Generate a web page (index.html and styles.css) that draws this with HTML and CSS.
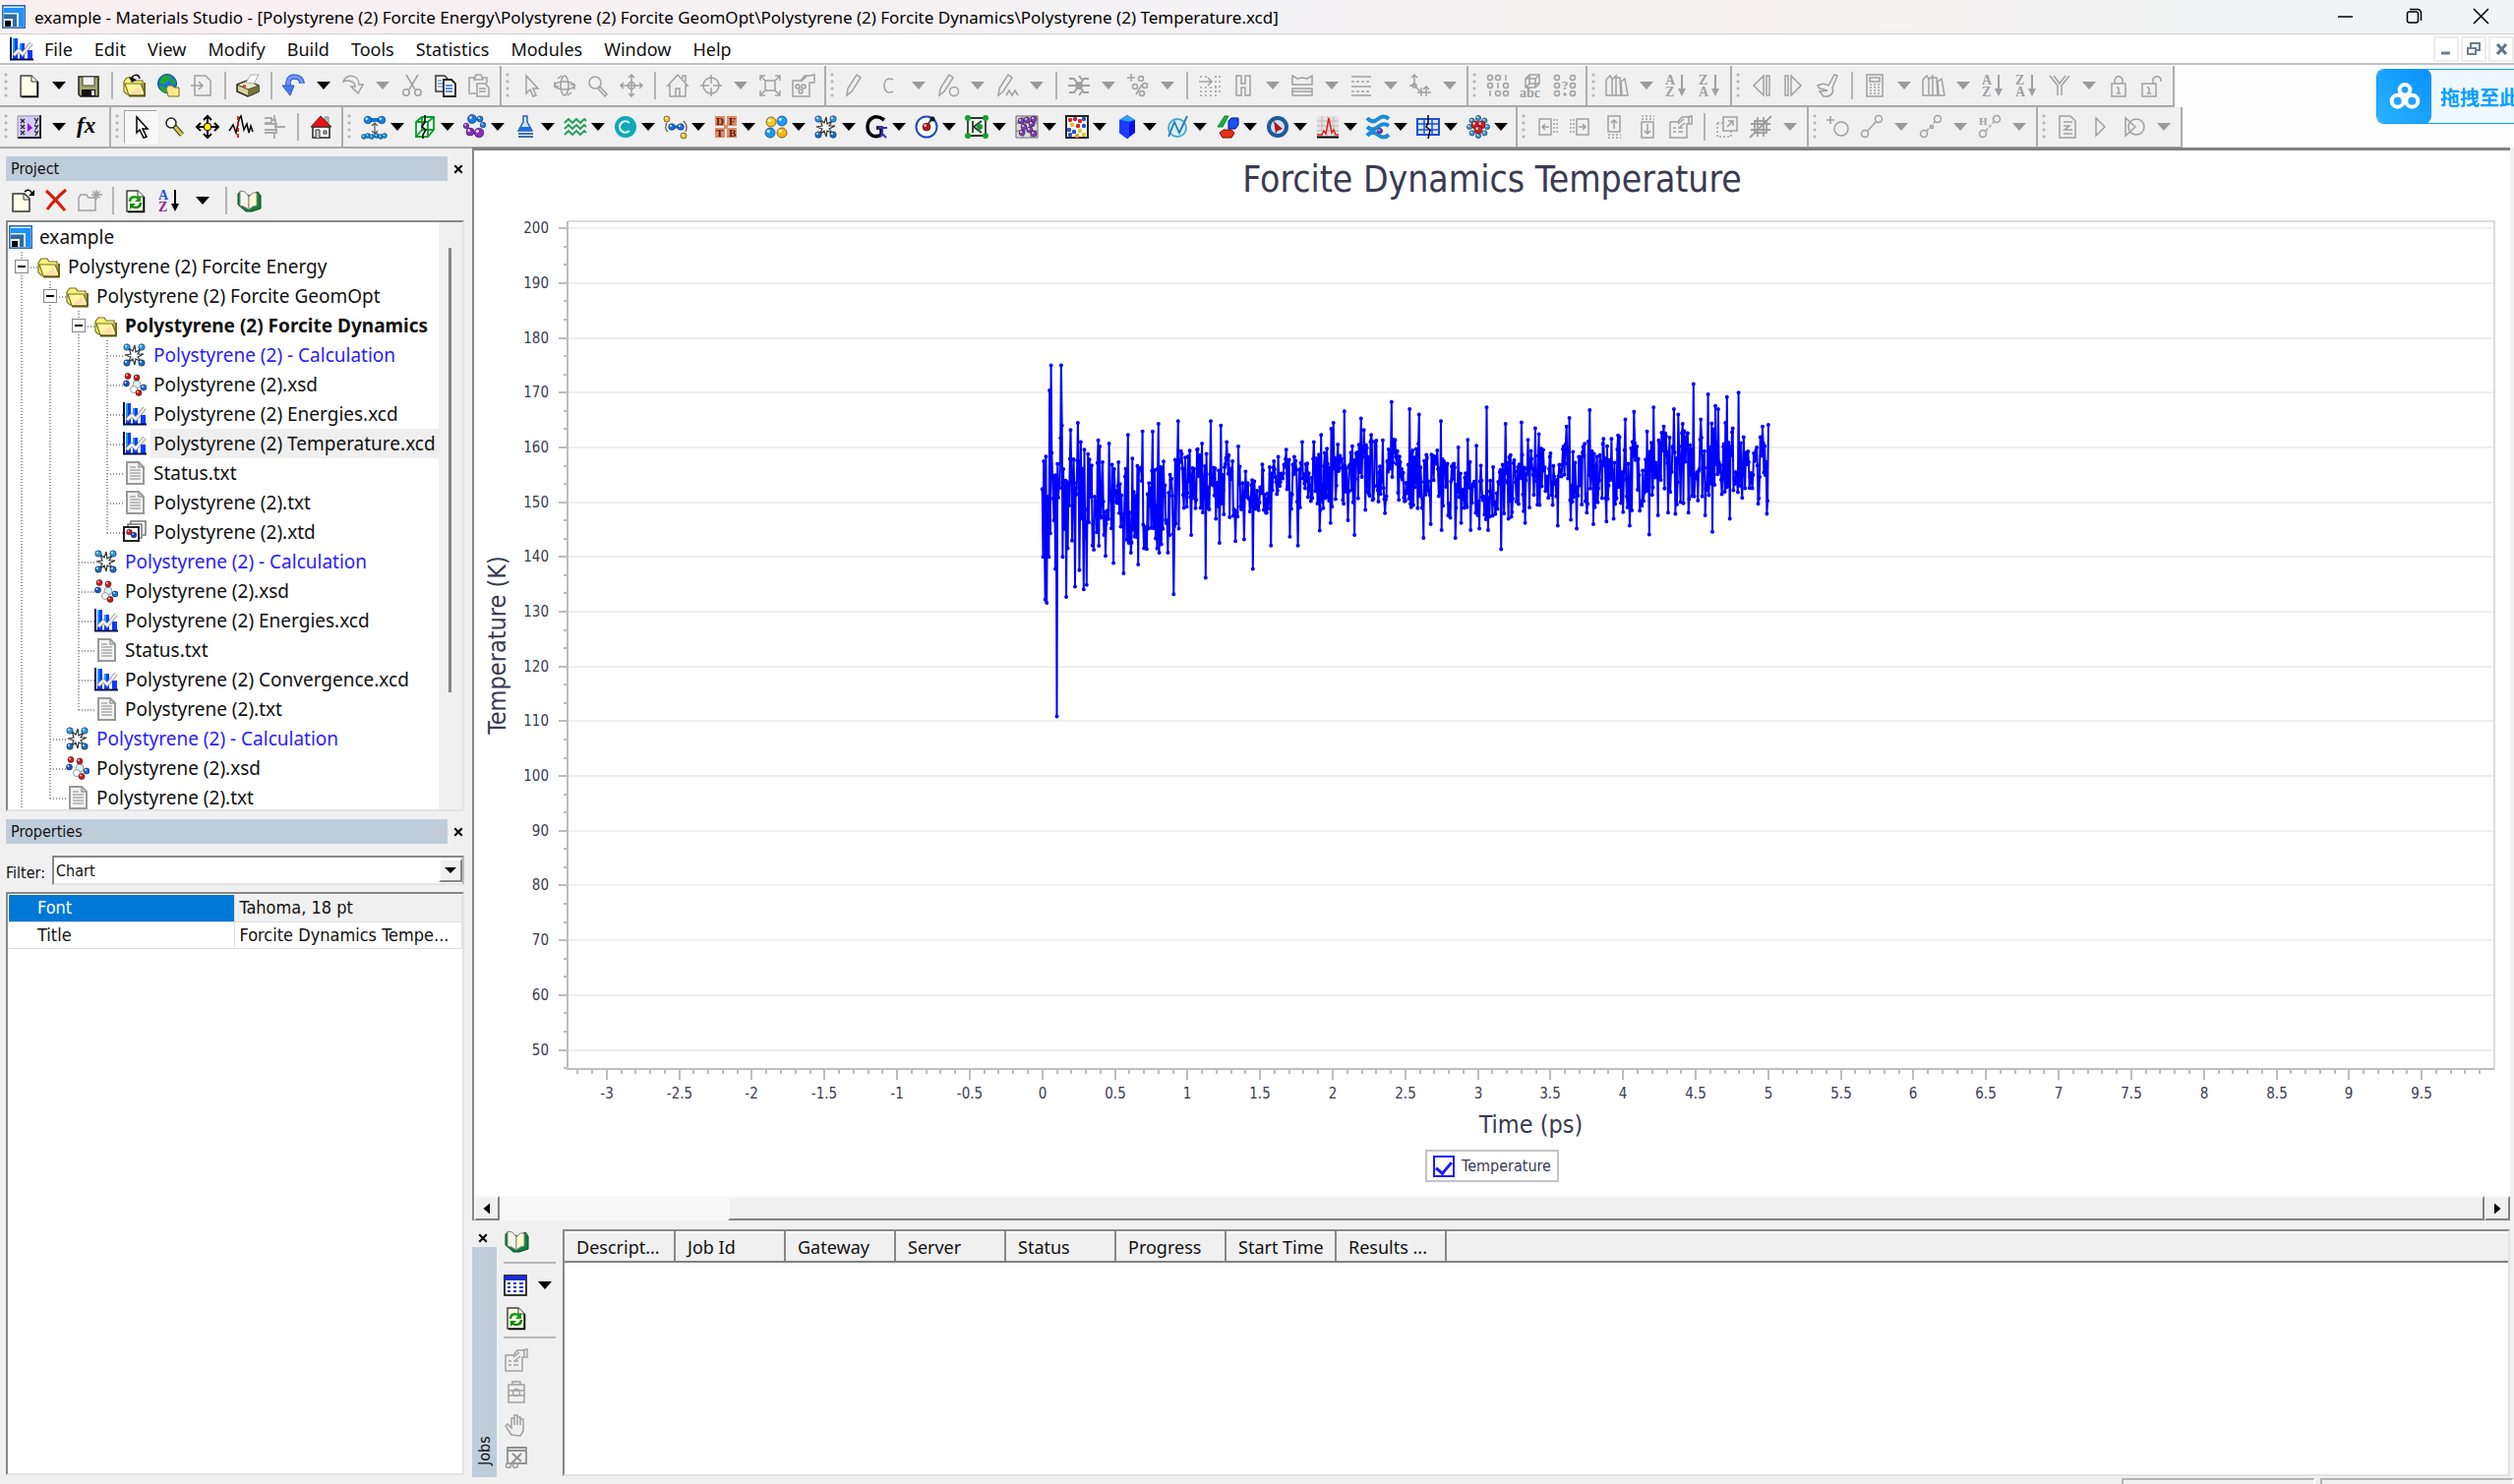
FILE: index.html
```html
<!DOCTYPE html>
<html lang="en">
<head>
    <meta charset="UTF-8">
    <meta name="viewport" content="width=device-width, initial-scale=1.0">
    <title>example - Materials Studio</title>
    <link rel="stylesheet" href="styles.css">
</head>
<body>
    <!-- Title bar -->
    <header class="titlebar">
        <span data-icon="app"></span>
        <span class="title">example - Materials Studio - [Polystyrene (2) Forcite Energy\Polystyrene (2) Forcite GeomOpt\Polystyrene (2) Forcite Dynamics\Polystyrene (2) Temperature.xcd]</span>
        <button class="winbtn" aria-label="Minimize" data-icon="winmin"></button>
        <button class="winbtn" aria-label="Restore" data-icon="winmax"></button>
        <button class="winbtn" aria-label="Close" data-icon="winclose"></button>
    </header>

    <!-- Menu -->
    <nav class="menubar">
        <span data-icon="chart"></span>
        <button>File</button>
        <button>Edit</button>
        <button>View</button>
        <button>Modify</button>
        <button>Build</button>
        <button>Tools</button>
        <button>Statistics</button>
        <button>Modules</button>
        <button>Window</button>
        <button>Help</button>
        <span class="spacer"></span>
        <button class="mdibtn" aria-label="Minimize document" data-icon="mdimin"></button>
        <button class="mdibtn" aria-label="Restore document" data-icon="mdimax"></button>
        <button class="mdibtn" aria-label="Close document" data-icon="mdiclose"></button>
    </nav>

    <!-- Toolbars, filled in by app.js -->
    <div class="toolbars">
        <div class="toolrow" id="toolrow1"></div>
        <div class="toolrow" id="toolrow2"></div>
    </div>

    <div class="upload">
        <span class="upload-logo" data-icon="cloud"></span>
        <span class="upload-text">拖拽至此</span>
    </div>

    <main class="workspace">
        <aside class="sidebar">
            <div class="panel-head">
                <h2>Project</h2>
                <button class="close" aria-label="Close Project" data-icon="x"></button>
            </div>
            <div class="project-tools">
                <button aria-label="New document" data-icon="newdoc"></button>
                <button aria-label="Delete" data-icon="del"></button>
                <button aria-label="New folder" data-icon="newfolder"></button>
                <i class="sep"></i>
                <button aria-label="Refresh" data-icon="refresh"></button>
                <button aria-label="Sort" data-icon="sortcolor"></button>
                <button class="drop" aria-label="Sort options"></button>
                <i class="sep"></i>
                <button aria-label="Help" data-icon="book"></button>
            </div>
            <div class="tree">
                <ul id="tree"></ul>
                <div class="scroll"><div class="scroll-thumb"></div></div>
            </div>

            <div class="panel-head">
                <h2>Properties</h2>
                <button class="close" aria-label="Close Properties" data-icon="x"></button>
            </div>
            <div class="filter">
                <label for="filter">Filter:</label>
                <div class="select-wrap">
                    <select id="filter"><option>Chart</option></select>
                    <span class="select-arrow"></span>
                </div>
            </div>
            <div class="props">
                <table>
                    <tr class="selected"><th>Font</th><td>Tahoma, 18 pt</td></tr>
                    <tr><th>Title</th><td>Forcite Dynamics Tempe...</td></tr>
                </table>
            </div>
        </aside>

        <section class="content">
            <div class="document">
                <div class="chart">
                    <h1>Forcite Dynamics Temperature</h1>
                    <svg id="plot" role="img" aria-label="Temperature against time"></svg>
                    <label class="legend"><input type="checkbox" checked>Temperature</label>
                </div>
                <div class="hscroll">
                    <button aria-label="Scroll left" data-icon="left"></button>
                    <div class="hscroll-track"><div class="hscroll-thumb"></div></div>
                    <button aria-label="Scroll right" data-icon="right"></button>
                </div>
            </div>

            <div class="jobs">
                <div class="jobs-side">
                    <button class="close" aria-label="Close Jobs" data-icon="x"></button>
                    <h2>Jobs</h2>
                </div>
                <div class="jobs-tools">
                    <button aria-label="Help" data-icon="book"></button>
                    <hr>
                    <div class="pair">
                        <button aria-label="View" data-icon="grid"></button>
                        <button class="drop" aria-label="View options"></button>
                    </div>
                    <button aria-label="Refresh" data-icon="refresh"></button>
                    <hr>
                    <button aria-label="Job properties" disabled data-icon="props"></button>
                    <button aria-label="Job details" disabled data-icon="monitor"></button>
                    <button aria-label="Stop job" disabled data-icon="hand"></button>
                    <button aria-label="Remove job" disabled data-icon="remove"></button>
                </div>
                <div class="jobs-list">
                    <table>
                        <tr>
                            <th>Descript...</th><th>Job Id</th><th>Gateway</th><th>Server</th>
                            <th>Status</th><th>Progress</th><th>Start Time</th><th>Results ...</th>
                            <th class="rest"></th>
                        </tr>
                    </table>
                </div>
            </div>
        </section>
    </main>

    <footer class="statusbar"><span></span><span></span></footer>

    <script src="app.js"></script>
</body>
</html>
```
FILE: styles.css
```css
* {
    box-sizing: border-box;
}
body {
    margin: 0;
    height: 100vh;
    display: flex;
    flex-direction: column;
    overflow: hidden;
    background-color: #f0f0f0;
    color: #111;
    font-family: "Noto Sans", sans-serif;
    font-size: 18px;
}
button {
    padding: 0;
    border: none;
    background: none;
    color: inherit;
    font: inherit;
    display: flex;
    align-items: center;
    justify-content: center;
}
h1, h2 {
    margin: 0;
    font-weight: normal;
}
svg {
    display: block;
}
[data-icon] > svg {
    width: 24px;
    height: 24px;
    overflow: visible;
}

/* title bar and menu */
.titlebar {
    flex: none;
    display: flex;
    align-items: center;
    height: 35px;
    padding-left: 2px;
    background: linear-gradient(90deg, #f9eff1, #f3f2f4 50%, #f7f2f1 70%, #f1f3f4 90%);
    border-bottom: 1px solid #d0d0d0;
}
.title {
    flex: 1;
    padding-left: 9px;
    font-size: 17px;
    white-space: nowrap;
    color: #000;
}
.winbtn {
    width: 70px;
    height: 34px;
}
.titlebar .winbtn:last-child {
    width: 66px;
}
.menubar {
    flex: none;
    display: flex;
    align-items: center;
    height: 29px;
    padding-left: 10px;
    background-color: #fff;
}
.menubar button {
    height: 26px;
    padding: 0 11px;
}
.spacer {
    flex: 1;
}
.menubar .mdibtn {
    width: 26px;
    height: 26px;
    padding: 0;
    margin-right: 2px;
    border: 2px solid #ececec;
}
.menubar .mdibtn:last-child {
    margin-right: 0;
}

/* toolbars */
.toolbars {
    flex: none;
    height: 86px;
    padding-top: 1px;
    background-color: #fdfdfd;
    border-top: 2px solid #c0c0c0;
}
.toolrow {
    display: flex;
    width: max-content;
    height: 42px;
    background-color: #f0f0f0;
    border-bottom: 2px solid #a8a8a8;
}
.group {
    display: flex;
    align-items: center;
    padding-right: 4px;
    border-right: 2px solid #adadad;
}
.grip {
    width: 13px;
    height: 28px;
    background: radial-gradient(circle at 6px 3px, #b8b8b8 1px, transparent 2px) 0 0 / 13px 7px;
}
.group button {
    width: 34px;
    height: 34px;
}
.group .pressed {
    background-color: #f8f8f8;
    border: 1px solid #a0a0a0;
    border-right-color: #fff;
    border-bottom-color: #fff;
}
.drop::before {
    content: "";
    border: 7px solid transparent;
    border-top: 8px solid #000;
    border-bottom: none;
}
.drop:disabled::before {
    border-top-color: #9a9a9a;
}
.group .drop {
    width: 26px;
}
.modules .grip {
    width: 15px;
}
.modules button {
    width: 33px;
}
.modules .drop {
    width: 18px;
    justify-content: flex-start;
}
.sep {
    width: 2px;
    height: 28px;
    margin: 0 5px 0 6px;
    background-color: #b4b4b4;
}

/* floating upload badge over the toolbars */
.upload {
    position: absolute;
    top: 70px;
    right: 0;
    display: flex;
    align-items: center;
    width: 140px;
    height: 56px;
    overflow: hidden;
    background-color: #eff8ff;
    border: 1px solid #0a9bff;
    border-right: none;
    border-radius: 8px 0 0 8px;
}
.upload-logo {
    flex: none;
    width: 55px;
    height: 56px;
    display: flex;
    align-items: center;
    justify-content: center;
    border-radius: 8px;
    background: linear-gradient(45deg, #2ab4ff, #0a90ff);
}
.upload-logo > svg {
    width: 32px;
    height: 32px;
}
.upload-text {
    flex: none;
    padding-left: 9px;
    font-family: "Noto Sans CJK SC", sans-serif;
    font-size: 20px;
    font-weight: bold;
    color: #06a0ff;
    white-space: nowrap;
}

/* left side */
.workspace {
    flex: 1;
    min-height: 0;
    display: flex;
}
.sidebar {
    flex: none;
    width: 480px;
    display: flex;
    flex-direction: column;
    padding: 9px 8px 2px 6px;
    font-family: "DejaVu Sans Condensed", "DejaVu Sans", sans-serif;
    font-size: 18px;
}
.panel-head {
    display: flex;
    align-items: center;
    height: 25px;
}
.panel-head h2 {
    flex: 1;
    height: 25px;
    padding-left: 5px;
    background-color: #bfcddb;
    font-size: 16px;
    line-height: 26px;
}
.close {
    width: 16px;
    height: 24px;
}
.close > svg {
    width: 10px;
    height: 10px;
}
.panel-head .close {
    margin-right: -2px;
    margin-left: 3px;
}
.project-tools {
    display: flex;
    align-items: center;
    height: 40px;
}
.project-tools button {
    width: 34px;
    height: 34px;
}
.tree, .props, .jobs-list {
    background-color: #fff;
    border: 2px solid #888;
    border-right-color: #e3e3e3;
    border-bottom-color: #e3e3e3;
}
.tree {
    display: flex;
    height: 601px;
    margin-bottom: 8px;
    overflow: hidden;
    font-family: "Noto Sans", sans-serif;
    font-size: 19px;
}
.tree ul {
    flex: 1;
    margin: 0;
    padding: 0 0 0 1px;
    list-style: none;
}
.tree li {
    display: flex;
    align-items: center;
    height: 30px;
    white-space: nowrap;
}
.tree li > svg {
    flex: none;
    width: 24px;
    height: 24px;
}
.tree .name {
    margin-left: 4px;
    padding: 0 3px;
    line-height: 30px;
}
.tree .current {
    font-weight: bold;
}
.tree .running {
    color: #2a20ff;
}
.tree .active {
    background-color: #efefef;
}
/* one cell of dotted tree line */
.line {
    flex: none;
    display: flex;
    align-items: center;
    width: 29px;
    height: 30px;
    padding-left: 6px;
    --v: repeating-linear-gradient(180deg, #999 0 1px, transparent 1px 3px);
    --h: repeating-linear-gradient(90deg, #999 0 1px, transparent 1px 3px);
    background-repeat: no-repeat;
}
.line.pass {
    background-image: var(--v);
    background-size: 2px 30px;
    background-position: 12px 0;
}
.line.tee {
    background-image: var(--v), var(--h);
    background-size: 2px 30px, 16px 2px;
    background-position: 12px 0, 13px 15px;
}
.line.end {
    background-image: var(--v), var(--h);
    background-size: 2px 16px, 16px 2px;
    background-position: 12px 0, 13px 15px;
}
.box {
    width: 14px;
    height: 14px;
    border: 1px solid #888;
    background: linear-gradient(#000, #000) center / 8px 2px no-repeat #fff;
}
.scroll {
    flex: none;
    width: 24px;
    padding-top: 26px;
    background-color: #f0f0f0;
}
.scroll-thumb {
    width: 3px;
    height: 452px;
    margin-left: 10px;
    background-color: #868686;
}
.filter {
    display: flex;
    align-items: center;
    height: 48px;
    margin-top: 3px;
}
.filter label {
    width: 47px;
    padding-top: 4px;
    font-size: 16px;
}
.select-wrap {
    flex: 1;
    position: relative;
    height: 30px;
}
.filter select {
    width: 100%;
    height: 30px;
    padding: 0 2px;
    appearance: none;
    border: 2px solid #888;
    border-right-color: #bbb;
    border-bottom-color: #e3e3e3;
    border-radius: 0;
    background-color: #fff;
    color: #111;
    font-family: inherit;
    font-size: 16px;
}
.select-arrow {
    position: absolute;
    top: 3px;
    right: 2px;
    display: flex;
    align-items: center;
    justify-content: center;
    width: 24px;
    height: 24px;
    background-color: #f0f0f0;
    border: 2px solid #fff;
    border-right-color: #888;
    border-bottom-color: #888;
    pointer-events: none;
}
.select-arrow::before {
    content: "";
    border: 6px solid transparent;
    border-top-color: #000;
    border-bottom: none;
}
.props {
    flex: 1;
    margin-top: -2px;
    padding: 1px 0 0 1px;
}
.props table {
    width: 100%;
    border-collapse: collapse;
    table-layout: fixed;
}
.props th, .props td {
    height: 27px;
    padding: 0 0 0 5px;
    border-bottom: 1px solid #dde0e4;
    border-right: 1px solid #dde0e4;
    font-weight: normal;
    line-height: 24px;
    text-align: left;
    white-space: nowrap;
}
.props th {
    width: 229px;
    padding-left: 29px;
}
.selected th {
    background-color: #0078d7;
    color: #fff;
}
.selected td {
    background-color: #f0f0f0;
}

/* document window */
.content {
    flex: 1;
    min-width: 0;
    display: flex;
    flex-direction: column;
    padding-right: 4px;
}
.document {
    flex: 1;
    min-height: 0;
    display: flex;
    flex-direction: column;
    border-top: 3px solid #808080;
    border-left: 2px solid #888;
}
.chart {
    flex: 1;
    min-height: 0;
    display: flex;
    flex-direction: column;
    align-items: center;
    padding-bottom: 14px;
    background-color: #fff;
    color: #3a3a52;
    font-family: "DejaVu Sans Condensed", "DejaVu Sans", sans-serif;
}
.chart h1 {
    height: 59px;
    font-size: 37px;
    line-height: 60px;
}
#plot {
    flex: 1;
    width: 100%;
    min-height: 0;
}
#plot text {
    fill: #3a3a52;
    font-size: 15px;
    text-anchor: middle;
}
#plot text.ylabel {
    text-anchor: end;
}
#plot text.axis {
    font-size: 25px;
}
.frame, .axisline, .grid {
    fill: none;
    shape-rendering: crispEdges;
}
.frame {
    stroke: #dcdcdc;
    stroke-width: 2px;
}
.axisline {
    stroke: #bdbdbd;
    stroke-width: 2px;
}
.grid {
    stroke: #efefef;
    stroke-width: 2px;
}
.series {
    fill: none;
    stroke: #0000ff;
    stroke-width: 2px;
    stroke-linejoin: round;
}
.marks {
    fill: none;
    stroke: #0000ff;
    stroke-width: 4px;
    stroke-linecap: round;
}
.legend {
    display: flex;
    align-items: center;
    gap: 7px;
    height: 33px;
    margin-top: 6px;
    padding: 0 6px;
    border: 2px solid #c4c4c8;
    font-size: 16px;
}
.legend input {
    appearance: none;
    width: 22px;
    height: 22px;
    margin: 0;
    border: 2px solid #1a1aff;
    display: grid;
    place-items: center;
}
.legend input:checked::before {
    content: "";
    width: 7px;
    height: 13px;
    border: solid #1a1aff;
    border-width: 0 3px 3px 0;
    transform: rotate(40deg);
}
.hscroll {
    flex: none;
    display: flex;
    height: 25px;
    background-color: #f8f8f8;
}
.hscroll button, .hscroll-thumb {
    background-color: #f0f0f0;
    border: 2px solid #f7f7f7;
    border-right-color: #808080;
    border-bottom-color: #808080;
}
.hscroll button {
    width: 26px;
}
.hscroll button > svg {
    width: 12px;
    height: 12px;
}
.hscroll-track {
    flex: 1;
    display: flex;
    justify-content: flex-end;
}
.hscroll-thumb {
    width: 88.5%;
}

/* jobs */
.jobs {
    flex: none;
    display: flex;
    height: 261px;
    padding-top: 9px;
}
.jobs-side {
    width: 25px;
    display: flex;
    flex-direction: column;
}
.jobs-side .close {
    width: 22px;
    height: 18px;
}
.jobs-side h2 {
    flex: 1;
    padding-top: 12px;
    background-color: #bfcddb;
    font-family: "DejaVu Sans Condensed", "DejaVu Sans", sans-serif;
    font-size: 16px;
    line-height: 25px;
    writing-mode: vertical-rl;
    transform: rotate(180deg);
}
.jobs-tools {
    width: 67px;
    padding: 0 7px;
}
.jobs-tools button {
    width: 26px;
    height: 33px;
}
.jobs-tools > button:first-child {
    height: 24px;
}
.jobs-tools .pair {
    display: flex;
}
.jobs-tools .drop {
    margin-left: 6px;
}
.jobs-tools hr {
    height: 2px;
    margin: 9px 0 5px;
    border: none;
    background-color: #b8b8b8;
}
.pair + button + hr {
    margin-top: 3px;
}
.jobs-list {
    flex: 1;
    margin-bottom: 1px;
}
.jobs-list table {
    width: 100%;
    border-collapse: collapse;
    table-layout: fixed;
}
.jobs-list th {
    width: 112px;
    height: 30px;
    padding: 0 0 0 12px;
    background-color: #f0f0f0;
    border-top: 2px solid #fff;
    border-right: 2px solid #888;
    border-bottom: 2px solid #808080;
    font-weight: normal;
    line-height: 24px;
    text-align: left;
    white-space: nowrap;
}
.jobs-list .rest {
    width: auto;
    border-right: none;
}
.statusbar {
    flex: none;
    display: flex;
    justify-content: flex-end;
    gap: 5px;
    height: 7px;
    padding-top: 1px;
}
.statusbar span {
    width: 197px;
    border: 2px solid #b4b4b4;
    border-bottom: none;
    border-right-color: #fff;
}
```
FILE: app.js
```js
// every icon is drawn on a 24 x 24 grid
const G = 'fill="none" stroke="#a0a0a0" stroke-width="1.5"';
const K = 'fill="none" stroke="#000" stroke-width="1.5"';
const dot = (x, y, r, fill) => `<circle cx="${x}" cy="${y}" r="${r}" fill="${fill}"/>`;
const ball = (x, y, r, fill) => `<circle cx="${x}" cy="${y}" r="${r}" fill="${fill}" stroke="#123" stroke-width=".6"/><circle cx="${x - r / 3}" cy="${y - r / 3}" r="${r / 3}" fill="#fff" opacity=".8"/>`;
const letter = (x, y, s, fill, size) => `<text x="${x}" y="${y}" fill="${fill}" font-size="${size}" font-weight="bold" font-family="Liberation Serif, serif">${s}</text>`;
const ring = (x, y, r) => `<circle cx="${x}" cy="${y}" r="${r}" ${G}/>`;
const page = '<path d="M3 2h11l6 6v15H3z" fill="#ffffe8" stroke="#444" stroke-width="1.500"/><path d="M14 2v6h6" fill="#fff" stroke="#333"/><path d="M4 23.500h16.500V8" fill="none" stroke="#000" stroke-width="1.500"/>';
const folder = '<path d="M1 8l3-4h6l2 3h8v14H4l-3-3z" fill="#fff27a" stroke="#76711c" stroke-width="1.200"/><path d="M2 10h16l4 10-1 2H6z" fill="#fff6a0" stroke="#76711c" stroke-width="1.200"/><path d="M8 20h11l-3-7z" fill="#ffd9b0"/><path d="M6 22.500h16V9" fill="none" stroke="#5b5715" stroke-width="1.800"/>';
const sorter = (a, b, ca, cb, ck) => letter(1, 11, a, ca, 14) + letter(1, 23, b, cb, 14) + `<path d="M18 1v17" stroke="${ck}" stroke-width="2"/><path d="M14 15h8l-4 8z" fill="${ck}"/>`;
const spark = '<path d="M6 5l4 3 2-6 1 7 5-3-3 5h6l-6 3 4 5-6-3-1 6-2-6-5 4 3-6-6-2 6-1z" fill="#fff" stroke="#333" stroke-width="1.200"/>' + ball(4, 4, 3.2, '#2a9bea') + ball(19, 4, 3.2, '#2a9bea') + ball(4, 20, 3.2, '#1670c8') + ball(19, 20, 3.2, '#1670c8');
const bondIcon = extra => ring(5, 19, 3.5) + ring(19, 4, 3.5) + `<path d="M8 16l8-9" ${G} ${extra}/>`;
const pencil = '<path d="M13 1l4 3-9 14-5 4 1-7z" ' + G + '/>';

const icons = {
    app: '<rect x=".8" y=".8" width="22.400" height="22.400" fill="#e6f2ff" stroke="#2a6db0" stroke-width="1.600"/><path d="M2 3h20v19h-5V8H2z" fill="#1e90ff"/><path d="M2 9.500h13V22h-4v-8H2z" fill="#336a9e"/><path d="M3 16h6v6H3z" fill="#000"/>',
    chart: '<path d="M3 1h5v21H3zM10 6h5v16h-5zM18 13h5v9h-5z" fill="#0a3cff"/><path d="M3 1h2v14H3zM10 6h2v9h-2z" fill="#1d9cff"/><path d="M4 18l5-5 4 4 9-11" fill="none" stroke="#888" stroke-width="4"/><path d="M4 18l5-5 4 4 9-11" fill="none" stroke="#f4f4f4" stroke-width="2.500"/><path d="M1 0v22.500h23" fill="none" stroke="#061048" stroke-width="2"/>',
    winmin: '<path d="M4 12h15" stroke="#000" stroke-width="1.500"/>',
    winmax: '<rect x="4.500" y="7" width="11" height="11" rx="2" fill="none" stroke="#000" stroke-width="1.500"/><path d="M7 4.500h8a3.500 3.500 0 013.500 3.500v8" fill="none" stroke="#000" stroke-width="1.500"/>',
    winclose: '<path d="M4 4l15 15M19 4L4 19" stroke="#000" stroke-width="1.500"/>',
    mdimin: '<path d="M7 16h9" stroke="#6b7f92" stroke-width="3"/>',
    mdimax: '<path d="M9 11V6h9v7h-3" fill="none" stroke="#6b7f92" stroke-width="2"/><rect x="6" y="11" width="8" height="6" fill="none" stroke="#6b7f92" stroke-width="2"/>',
    mdiclose: '<path d="M8 7l9 10M17 7L8 17" stroke="#5f7386" stroke-width="3"/>',
    x: '<path d="M3 3l18 18M21 3L3 21" stroke="#000" stroke-width="5"/>',
    left: '<path d="M18 1v22L5 12z" fill="#000"/>',
    right: '<path d="M6 1v22l13-11z" fill="#000"/>',
    cloud: '<g fill="none" stroke="#fff" stroke-width="3"><circle cx="12" cy="7" r="4"/><circle cx="6.500" cy="15.500" r="4.500"/><circle cx="17.500" cy="15.500" r="4.500"/></g>',
    // project window
    newdoc: '<path d="M2 5h12l5 5v13H2z" fill="#ffffe8" stroke="#333" stroke-width="1.500"/><path d="M13 5v6h6" fill="none" stroke="#333"/><path d="M14 3c3-3 6-2 8 2" ' + K + '/><path d="M24 1v6h-6z" fill="#000"/>',
    del: '<path d="M2 2c7 6 13 13 19 20" fill="none" stroke="#d81c08" stroke-width="3"/><path d="M22 1C15 7 8 14 3 21" fill="none" stroke="#d81c08" stroke-width="3"/>',
    newfolder: '<path d="M1 9l2-3h6l2 3h7v13H1z" ' + G + '/><path d="M19 1v10M14 6h11M15.500 2.500l7 7M22.500 2.500l-7 7" ' + G + '/>',
    refresh: page + '<path d="M6 13c0-5 5-6 9-3" fill="none" stroke="#0c9a0c" stroke-width="2.500"/><path d="M17 7v6h-6z" fill="#0c9a0c"/><path d="M17 14c0 5-5 6-9 4" fill="none" stroke="#078407" stroke-width="2.500"/><path d="M6 21v-6h6z" fill="#078407"/>',
    sortcolor: sorter('A', 'Z', '#2255dd', '#9a1a9a', '#000'),
    book: '<path d="M1 5l2-2 9 4 9-4 3 4v13l-9 3H9l-8-7z" fill="#11803d" stroke="#094a22"/><path d="M3 2l5 1 4 5v13l-5-3-4-1z" fill="#f5f4e8" stroke="#888"/><path d="M12 8l4-4h4v13l-4 1-4 3z" fill="#fffbd0" stroke="#888"/>',
    folder: folder,
    calc: spark,
    molecule: '<circle cx="14" cy="12" r="4" fill="#d8f2fa" stroke="#999"/><circle cx="11" cy="17" r="3.500" fill="#fff" stroke="#999"/>' + ball(5, 3.500, 3, '#e01010') + ball(14, 5, 3, '#e01010') + ball(3.500, 11, 3, '#1a50c8') + ball(21, 15, 3, '#1a70e0') + ball(16, 20.500, 3, '#e01010'),
    text: '<path d="M4 1h12l5 5v17H4z" fill="#f4f4f4" stroke="#999" stroke-width="2"/><path d="M16 1v5h5" fill="none" stroke="#999" stroke-width="1.500"/><path d="M7 6h6M7 9h11M7 12h11M7 15h11M7 18h11" stroke="#aaa" stroke-width="1.300"/>',
    frames: '<path d="M8 5V1h15v14h-3M5 8V4h14v14h-2" fill="#fff" stroke="#777" stroke-width="1.500"/><rect x="1" y="7" width="15" height="14" fill="#fff" stroke="#222" stroke-width="2"/>' + ball(6.500, 12, 2.800, '#e01010') + ball(11, 15, 2.800, '#1540c8'),
    // first toolbar row
    new: page,
    save: '<path d="M2 3h20v20H4l-2-2z" fill="#a5a56a" stroke="#222" stroke-width="1.500"/><path d="M6 3h12v9H6z" fill="#f4f4f0" stroke="#444"/><path d="M5 16h14v7H5z" fill="#111"/><path d="M15 17h3v5h-3z" fill="#ddd"/>',
    open: folder + '<path d="M8 6c2-6 8-6 9-1" ' + K + '/><path d="M6 3l3 6 5-3z" fill="#000"/>',
    globe: '<circle cx="11" cy="10" r="9.500" fill="#1c6fe0" stroke="#0b3f8a"/><path d="M6 3l5-2 4 3-3 4-5 3-4-2zM14 4l5 3 1 4-5-2zM3 12l5 1 3 5-3 2-4-4z" fill="#1faa30"/><path d="M10 15l2-3h4l2 2h5v9H12z" fill="#ffe98a" stroke="#76711c"/>',
    import: '<path d="M5 2h11l5 5v15H5z" ' + G + '/><path d="M1 12h12M9 8l4 4-4 4" ' + G + '/>',
    print: '<path d="M1 11l10-4 12 5v6l-11 5-11-5z" fill="#d8d29a" stroke="#222" stroke-width="1.500"/><path d="M1 11l11 5 11-4-11-5z" fill="#f0ecc4" stroke="#333"/><path d="M12 16v7l11-5v-6z" fill="#77733c"/><path d="M10 9l5-8h8l-5 9z" fill="#fff" stroke="#aaa"/><path d="M7 12l3 1" stroke="#e02020" stroke-width="2"/>',
    undo: '<path d="M6 14V9c0-4 3-6 6-6 5 0 8 3 8 7" fill="none" stroke="#2a55b8" stroke-width="5.500"/><path d="M6 14V9c0-4 3-6 6-6 5 0 8 3 8 7" fill="none" stroke="#6a96ff" stroke-width="3.500"/><path d="M0 12h12l-4 10z" fill="#4a7cf8" stroke="#2a55b8"/>',
    redo: '<path d="M2 8c2-8 16-8 16 3h4l-5 9-7-7h4c0-6-8-7-12-5z" ' + G + '/>',
    cut: '<path d="M6 1l9 15M18 1L9 16" ' + G + '/>' + ring(6, 19, 3.2) + ring(18, 19, 3.2),
    copy: '<path d="M2 2h9l3 3v13H2z" fill="#fff" stroke="#333" stroke-width="1.500"/><path d="M4 7h4M4 10h5M4 13h5" stroke="#2a62e0"/><path d="M10 6h8l4 4v13H10z" fill="#fff" stroke="#222" stroke-width="1.800"/><path d="M12 12h7M12 15h7M12 18h7" stroke="#2a62e0" stroke-width="1.300"/>',
    paste: '<path d="M8 4H2v16h7M15 4h5v6M7 6l2-5h5l2 5zM10 10h8l4 4v9H10zM12 15h7M12 18h7" ' + G + '/>',
    pointer: '<path d="M7 2v18l4-4 3 7 3-1-3-7h5z" ' + G + '/>',
    rotate: '<ellipse cx="12" cy="12" rx="10" ry="4" ' + G + '/><ellipse cx="12" cy="12" rx="4" ry="10" ' + G + '/><path d="M5 5l4-3M19 19l-4 3M2 8v5h4M22 16v-5h-4" ' + G + '/>',
    zoom: ring(9, 9, 6) + '<path d="M14 13l7 8-2 2-7-8z" ' + G + '/>',
    move: '<path d="M12 1v22M1 12h22M9 4l3-3 3 3M9 20l3 3 3-3M4 9l-3 3 3 3M20 9l3 3-3 3" ' + G + '/>' + ring(12, 12, 3.5),
    home: '<path d="M2 12L12 1l10 11h-2v11H4V12zM10 23v-8h4v8M17 5V2h3v6" ' + G + '/>',
    target: ring(12, 12, 8) + '<path d="M12 1v9M12 14v9M1 12h9M14 12h9" ' + G + '/>',
    fit: '<path d="M7 7h10v10H7zM7 7L2 2M2 7V2h5M17 7l5-5M17 2h5v5M7 17l-5 5M2 17v5h5M17 17l5 5M22 17v5h-5" ' + G + '/>',
    props: '<path d="M1 7h8l4-5h5l5-1v8h-5v14H1zM9 9l6-5M11 12l5-4M4 13h3M9 13h5M4 17h3M9 17h5M20 2v6" ' + G + '/>',
    dispprops: '<path d="M1 7h8l4-5h5l5-1v8h-5v14H1zM9 8l6-5" ' + G + '/>' + ring(6, 13, 2) + ring(12, 13, 2) + ring(9, 18, 2),
    pencil: pencil,
    carbon: '<path d="M16 6c-6-3-9 1-9 6s3 9 9 6" ' + G + '/>',
    penring: pencil + ring(18, 18, 4.5),
    penchain: pencil + '<path d="M11 22l3-5 3 5 3-5 3 5" ' + G + '/>',
    clean: '<path d="M2 5h5l10 14h5M2 19h5L17 5h5M1 12h22M12 2l3 4M12 22l3-4" fill="none" stroke="#a0a0a0" stroke-width="2"/><circle cx="12" cy="12" r="4" fill="#a0a0a0"/>',
    charges: '<path d="M5 0v8M1 4h8M10 21l6-10" ' + G + '/>' + ring(15, 5, 2.5) + ring(19, 12, 2.5) + ring(9, 13, 2.5) + ring(16, 20, 2.5),
    arrowdots: '<path d="M1 8h13M10 4l4 4-4 4" ' + G + '/><path d="M2 14h20M2 18h20M2 22h20M18 2v20M22 2v20M2 3h8" stroke-dasharray="2 3" ' + G + '/>',
    hydrogen: '<path d="M5 2h5v8h4V2h5v20h-5v-8h-4v8H5z" ' + G + '/>',
    layer: '<path d="M2 2l5 3 5-1 5 1 5-3v9H2zM2 15h20v3H2zM2 18h20v4H2z" ' + G + '/>',
    lines: '<path d="M2 3h20M2 13h20M2 22h20" ' + G + '/><path d="M2 8h20M2 18h20" ' + G + ' stroke-dasharray="3 2"/>',
    xyz: '<path d="M6 12V1M3 4l3-3 3 3M6 12h-5M6 12l6 6M13 14v9M9 19h14M18 13v10M15 16l3-3 3 3" ' + G + '/>' + ring(6, 12, 2),
    bits: [4, 12, 20].map(x => [4, 12, 20].map(y => (x + y) % 3 ? ring(x, y, 2.5) : `<path d="M${x} ${y - 3}v6" ${G}/>`).join('')).join(''),
    cubeabc: '<path d="M6 5h10v9H6zM6 5l4-4h10v9l-4 4M16 5l4-4M10 1v9h10M6 14l4-4" ' + G + '/>' + letter(0, 24, 'abc', '#a0a0a0', 14),
    bitsq: [4, 20].map(x => [4, 12, 20].map(y => ring(x, y, 2.5)).join('')).join('') + letter(9, 16, '?', '#a0a0a0', 13) + ring(12, 21, 1),
    books: '<path d="M1 22V6l4-4 2 3v17zM7 22V6l4-4v20zM11 22V4h4l1 18zM16 8l4-3 3 17h-6z" ' + G + '/>',
    az: sorter('A', 'Z', '#a0a0a0', '#a0a0a0', '#a0a0a0'),
    za: sorter('Z', 'A', '#a0a0a0', '#a0a0a0', '#a0a0a0'),
    prev: '<path d="M14 2v20L4 12zM17 2h3v20h-3z" ' + G + '/>',
    next: '<path d="M8 2v20l10-10zM2 2h3v20H2z" ' + G + '/>',
    sweep: '<path d="M1 12c5-3 8-2 11 0l6-11 3 1-5 12c2 5-1 8-5 9H7l-4-5 8-1-8-2z" ' + G + '/>',
    sheet: '<path d="M4 1h16v22H4zM7 4h10v4H7z" ' + G + '/><path d="M7 11h11M7 14h11M7 17h11M7 20h11" stroke-dasharray="2 2" ' + G + '/>',
    funnel: '<path d="M2 2l8 10v10M22 2l-8 10v10M6 2l6 8 6-8" ' + G + '/>',
    lock: '<path d="M5 10h14v13H5zM8 10V6q4-7 8 0v4M12 14v5M10 20h4M10 14h2" ' + G + '/>',
    unlock: '<path d="M2 10h14v13H2zM13 10V5q4-5 8 0v3M9 14v5M7 20h4M7 14h2" ' + G + '/>',
    // second toolbar row
    script: '<rect x="0" y="0" width="24" height="24" fill="#d4ccff"/><path d="M0 23h23V0" fill="none" stroke="#222" stroke-width="2"/><path d="M0 23V1h22" fill="none" stroke="#999"/><path d="M10 8v9l5-4z" fill="#8a10e0"/><path d="M3 4l4 4M7 4L3 8M3 10l4 4M7 10l-4 4M3 16l4 4M7 16l-4 4M17 3l2 3M21 3l-3 6M17 10l2 2M21 10l-3 5M17 16l2 2M21 16l-3 5" stroke="#222" stroke-width="1.300"/>',
    fx: '<text x="0" y="18" font-size="23" font-style="italic" font-weight="bold" font-family="Liberation Serif, serif">fx</text>',
    pointerk: '<path d="M8 2v16l3-3 4 8 3-1-4-8h5z" fill="#fff" stroke="#000" stroke-width="1.500"/>',
    zoomk: '<path d="M12 11l8 9" stroke="#333" stroke-width="5"/><path d="M12 11l8 9" stroke="#e0d040" stroke-width="3"/><circle cx="9" cy="8" r="5" fill="#fff" stroke="#222" stroke-width="1.500"/>',
    movek: '<path d="M12 1v22M1 12h22M8 5l4-4 4 4M8 19l4 4 4-4M5 8l-4 4 4 4M19 8l4 4-4 4" fill="none" stroke="#000" stroke-width="2"/><circle cx="12" cy="12" r="3.800" fill="#fff000" stroke="#000"/>',
    wave: '<path d="M0 16l4-6 3 8 3-14 2-3 3 14 3-6 2 9 2-7 2 6" ' + K + '/><path d="M9 1v22" stroke="#f01010" stroke-width="1.800" stroke-dasharray="4 2"/>',
    dendro: '<path d="M2 3h7v5H2M2 9h12v6H2M2 18h7M9 5h4v6M9 18h5v-5M12 12h11M12 0v4M12 19v5" fill="none" stroke="#a8a8a8" stroke-width="1.800"/>',
    homered: '<path d="M4 12h17v11H4z" fill="#fff" stroke="#222" stroke-width="1.500"/><path d="M16 2h4v7h-4z" fill="#bbb" stroke="#888"/><path d="M12 1L2 12h21z" fill="#f01010" stroke="#333"/><path d="M7 23v-8h4v8M15 16h3v3h-3z" fill="#ccc" stroke="#333"/>',
    adsorb: '<path d="M5 5h14" stroke="#0a7ae0" stroke-width="4"/>' + ball(5, 5, 3.8, '#0a8af0') + ball(19, 5, 3.8, '#0a8af0') + '<path d="M12 8v11M9 11l3-3 3 3M9 16l3 3 3-3" fill="none" stroke="#555" stroke-width="1.200"/>' + [1, 5, 9, 14, 18, 22].map((x, i) => ball(x, i % 2 ? 21 : 22, 2.4, '#0a9af0')).join(''),
    cube: '<path d="M3 7l6-5h12v13l-6 7H3zM3 7h12v15M15 7l6-5M9 2v13h12M3 22l6-7" fill="none" stroke="#0b9a30" stroke-width="1.800"/><path d="M12 0v7l-3 5 4 3-3 5v4" ' + K + '/>',
    cluster: ball(9, 4, 4.500, '#1a7af0') + ball(17, 4, 3, '#1a7af0') + ball(20, 10, 2.800, '#1a7af0') + ball(3, 11, 2.800, '#8a2ad0') + ball(7, 17, 4, '#8a2ac0') + ball(16, 18, 4.800, '#8a2ac0'),
    flask: '<path d="M10 1h4v6l5 9H5l5-9z" fill="#cfe8ff" stroke="#2a62b0" stroke-width="1.500"/><path d="M7 12h10l2 4H5z" fill="#1c6fe0"/><path d="M5 19h15M5 22h15" stroke="#0b4a9a" stroke-width="1.500"/>',
    waves: [6, 12, 18].map(y => `<path d="M1 ${y + 2}l4-4 4 4 4-4 4 4 4-4 2 2" fill="none" stroke="#16a050" stroke-width="1.800"/>`).join(''),
    castep: '<circle cx="12" cy="12" r="11" fill="#12a8b8"/><path d="M16 8c-5-4-10 0-10 4s5 8 10 4" fill="none" stroke="#d8f8ff" stroke-width="2"/>',
    conform: '<path d="M8 12h9" stroke="#1c6fe0" stroke-width="3"/>' + ball(3, 4, 3, '#ffc81a') + ball(8, 12, 3.300, '#1c6fe0') + ball(17, 12, 3.300, '#1c6fe0') + ball(20, 21, 3, '#ffc81a') + '<path d="M3 8q-3 5 1 9M20 6q5 5 2 11" fill="none" stroke="#555" stroke-width="1.200"/>',
    dftb: '<path d="M1 1h10v10H1zM13 1h10v10H13zM1 13h10v10H1zM13 13h10v10H13zM10 10h4v4h-4z" fill="#e08a66"/>' + letter(2, 10, 'D', '#5a1a0a', 11) + letter(15, 10, 'F', '#5a1a0a', 11) + letter(2, 22, 'T', '#5a1a0a', 11) + letter(15, 22, 'B', '#5a1a0a', 11),
    dmol: ball(7, 7, 5, '#ffc81a') + ball(18, 6, 5, '#1c9af8') + ball(6, 18, 5, '#1c9af8') + ball(18, 18, 5, '#ffb80a'),
    forcite: spark,
    gulp: '<path d="M20 5C11-2 3 4 3 12s7 12 14 8v-7h-5" fill="none" stroke="#000" stroke-width="3.500"/><path d="M14 13h9M18 13v6l-3 4M18 19l4 4" stroke="#3a2ad0" stroke-width="2"/>',
    atom: '<circle cx="12" cy="12" r="10.500" fill="#fff" stroke="#1a4ac0" stroke-width="2"/><path d="M12 12l5-8" stroke="#222" stroke-width="1.500"/>' + ball(12, 12, 4, '#c81010') + dot(18, 4, 2.5, '#111'),
    kinetix: '<path d="M3 3h18v18H3zM8 6v12M17 6l-8 6 8 6" fill="#e8f8e8" stroke="#333" stroke-width="1.800"/>' + [[3, 3], [21, 3], [3, 21], [21, 21], [15, 12]].map(p => dot(p[0], p[1], 3, '#12a030')).join(''),
    meso: '<path d="M1 1h22v22H1z" fill="#ddd" stroke="#666"/><path d="M1 8h22M1 16h22M8 1v22M16 1v22" stroke="#777"/>' + [[6, 6], [12, 5], [17, 9], [9, 12], [15, 15], [7, 18], [19, 19], [19, 4]].map(p => ball(p[0], p[1], 3, '#8a3ab8')).join(''),
    mesocite: '<path d="M1 1h22v22H1z" fill="#fff" stroke="#222" stroke-width="2"/>' + [[5, 5], [10, 4], [15, 6], [19, 4], [7, 10], [13, 11], [19, 11], [4, 15], [9, 17], [15, 16], [19, 20], [5, 20], [12, 21]].map((p, i) => dot(p[0], p[1], 2.2, ['#e02020', '#c02040', '#e02020', '#1c50d0', '#e8c020', '#e02020', '#1c50d0', '#1c50d0', '#1c50d0', '#e8c020', '#e8c020', '#1c50d0', '#e8a020'][i])).join(''),
    morph: '<path d="M12 0l8 5v13l-8 6-8-6V5z" fill="#1010e0"/><path d="M12 0l8 5-6 2-10-2z" fill="#2aa0ff"/><path d="M4 5l10 2v16l-2 1-8-6z" fill="#1c3cff"/>',
    onetep: '<circle cx="12" cy="13" r="9" fill="#d6f0fa" stroke="#4aa8d0" stroke-width="1.800"/><path d="M3 22l6-15 5 11L22 1" fill="none" stroke="#2a7ab0" stroke-width="1.800"/>',
    polymorph: '<path d="M2 12L9 1h4L7 12z" fill="#1fb030" stroke="#084"/><path d="M13 6l3-3h7v7l-3 4h-7z" fill="#1c50f0" stroke="#018"/><path d="M4 18l4-3h8l3 3-3 5H7z" fill="#e83010" stroke="#700"/>',
    compass: '<circle cx="12" cy="12" r="9" fill="#cfe2f2" stroke="#1c5a9a" stroke-width="4"/><path d="M8 6l9 8-5 2-2 3z" fill="#b01818"/>',
    reflex: '<path d="M1 1h22v21H1z" fill="#e4e4e4"/><path d="M1 6h22M1 11h22M1 16h22M6 1v21M12 1v21M18 1v21" stroke="#bbb"/><path d="M1 20h5l2-4 2 3 3-16 3 15 2-3 2 5h3" fill="none" stroke="#e02020" stroke-width="1.500"/><path d="M1 22.500h22" stroke="#000" stroke-width="2"/>',
    sorption: '<path d="M1 3q5 6 11 1t11 0M1 12q5 5 11 0t11-1M1 21q5-6 11-1t11 0" fill="none" stroke="#1c8ad8" stroke-width="4"/>' + ball(14, 16, 2.6, '#8a2ac0'),
    statgrid: '<path d="M1 4h22v16H1z" fill="#dbe8ff" stroke="#1c50d0" stroke-width="2"/><path d="M1 9h22M1 15h22M8 4v16M16 4v16" stroke="#1c50d0" stroke-width="1.500"/><path d="M12 0v8l-2 4 4 3-2 9" ' + K + '/>',
    vamp: [0, 45, 90, 135, 180, 225, 270, 315].map(a => ball(12 + 9 * Math.cos(a * Math.PI / 180), 12 + 9 * Math.sin(a * Math.PI / 180), 2.600, '#3a9ae0')).join('') + ball(9, 10, 4, '#e01818') + ball(15, 10, 4, '#e01818') + ball(12, 15, 4, '#e01818'),
    addleft: '<path d="M4 4h12v16H4z" ' + G + '/><path d="M19 4v16M22 4v16" stroke-dasharray="2 2" ' + G + '/><path d="M14 12H7M10 9l-3 3 3 3" ' + G + '/>',
    addright: '<path d="M8 4h12v16H8z" ' + G + '/><path d="M2 4v16M5 4v16" stroke-dasharray="2 2" ' + G + '/><path d="M10 12h7M14 9l3 3-3 3" ' + G + '/>',
    addup: '<path d="M6 1h12v16H6z" ' + G + '/><path d="M6 20h13M6 23h13" stroke-dasharray="2 2" ' + G + '/><path d="M12 14V5M9 8l3-3 3 3" ' + G + '/>',
    adddown: '<path d="M6 7h12v16H6z" ' + G + '/><path d="M6 1h13M6 4h13" stroke-dasharray="2 2" ' + G + '/><path d="M12 9v10M9 16l3 3 3-3" ' + G + '/>',
    expand: '<path d="M8 2h14v14H8zM12 12l6-6M13 6h5v5" ' + G + '/><path d="M2 8v14h14M2 8h6M16 22v-6" stroke-dasharray="2 2" ' + G + '/>',
    supercell: '<path d="M6 6h12v12H6zM2 9h20M2 15h20M9 2v20M15 2v20M1 23L23 1" fill="none" stroke="#a0a0a0" stroke-width="1.800"/>',
    addring: ring(15, 14, 7) + '<path d="M4 1v8M0 5h8" ' + G + '/>',
    bond1: bondIcon(''),
    bond2: bondIcon('stroke-dasharray="3 2"') + ring(13, 12, 1.5),
    bondh: bondIcon('stroke-dasharray="3 2"') + letter(1, 10, 'H', '#a0a0a0', 11),
    run: '<path d="M4 1h11l5 5v17H4zM8 7h9M8 11h6l-5 4h8M8 19h9" ' + G + '/>',
    play: '<path d="M7 3v18l9-9z" ' + G + '/>',
    playring: ring(14, 12, 8) + '<path d="M3 3v18l10-9z" ' + G + '/>',
    // jobs window
    grid: '<rect x="1" y="2" width="22" height="20" fill="#fff" stroke="#222" stroke-width="1.800"/><path d="M1 2h22v5H1z" fill="#1a2ad8"/><path d="M4 10h3M10 10h3M16 10h4M4 14h3M10 14h3M16 14h4M4 18h3M10 18h3M16 18h4" stroke="#1a3ad8" stroke-width="2"/>',
    monitor: '<path d="M4 4h16v18H4zM8 4V1h8v3M4 10h16M4 15h16" ' + G + '/>' + ring(12, 12, 3.5),
    hand: '<path d="M7 22l-6-9 2-2 4 4V5h3V2h3v2h3v2h3v12l-3 5zM10 5v7M13 4v8M16 6v6" ' + G + '/>',
    remove: '<path d="M3 2h19v16H3zM3 5h19M7 18L17 8M8 8l9 8" fill="none" stroke="#909090" stroke-width="1.800"/>' + ring(4, 20, 2.5) + ring(11, 20, 2.5)
};

const draw = name => `<svg viewBox="0 0 24 24" aria-hidden="true">${icons[name]}</svg>`;

document.querySelectorAll('[data-icon]').forEach(el => {
    el.innerHTML = draw(el.dataset.icon);
});

// toolbars: "v" is a drop-down arrow, "-" a greyed one, "|" a separator
const rows = {
    toolrow1: [
        'new v save | open globe import | print | undo v redo - cut copy paste',
        'pointer rotate zoom move | home target - fit dispprops',
        'pencil carbon - penring - penchain - | clean - charges - | arrowdots hydrogen - layer - lines - xyz -',
        'bits cubeabc bitsq',
        'books - az za',
        'prev next sweep | sheet - books - az za funnel - lock unlock'
    ],
    toolrow2: [
        'script v fx',
        'pointerk zoomk movek wave dendro | homered',
        'adsorb v cube v cluster v flask v waves v castep v conform v dftb v dmol v forcite v gulp v atom v kinetix v meso v mesocite v morph v onetep v polymorph v compass v reflex v sorption v statgrid v vamp v',
        'addleft addright addup adddown props | expand supercell -',
        'addring bond1 - bond2 - bondh -',
        'run play playring -'
    ]
};

for (const id in rows) {
    document.getElementById(id).innerHTML = rows[id].map(group => {
        const tools = group.split(' ').map(t => {
            if (t === '|') return '<i class="sep"></i>';
            if (t === 'v') return '<button class="drop" aria-label="More"></button>';
            if (t === '-') return '<button class="drop" aria-label="More" disabled></button>';
            return `<button aria-label="${t}"${t === 'pointerk' ? ' class="pressed"' : ''} data-icon="${t}">${draw(t)}</button>`;
        });
        return `<div class="group${group.startsWith('adsorb') ? ' modules' : ''}"><i class="grip"></i>${tools.join('')}</div>`;
    }).join('');
}

// project tree: lines, icon, name, state
// p = line passing through, t = branch, e = last branch, b = branch with a box
const tree = [
    ['', 'app', 'example'],
    ['b', 'folder', 'Polystyrene (2) Forcite Energy'],
    ['pb', 'folder', 'Polystyrene (2) Forcite GeomOpt'],
    ['ppb', 'folder', 'Polystyrene (2) Forcite Dynamics', 'current'],
    ['pppt', 'calc', 'Polystyrene (2) - Calculation', 'running'],
    ['pppt', 'molecule', 'Polystyrene (2).xsd'],
    ['pppt', 'chart', 'Polystyrene (2) Energies.xcd'],
    ['pppt', 'chart', 'Polystyrene (2) Temperature.xcd', 'active'],
    ['pppt', 'text', 'Status.txt'],
    ['pppt', 'text', 'Polystyrene (2).txt'],
    ['pppe', 'frames', 'Polystyrene (2).xtd'],
    ['ppt', 'calc', 'Polystyrene (2) - Calculation', 'running'],
    ['ppt', 'molecule', 'Polystyrene (2).xsd'],
    ['ppt', 'chart', 'Polystyrene (2) Energies.xcd'],
    ['ppt', 'text', 'Status.txt'],
    ['ppt', 'chart', 'Polystyrene (2) Convergence.xcd'],
    ['ppe', 'text', 'Polystyrene (2).txt'],
    ['pt', 'calc', 'Polystyrene (2) - Calculation', 'running'],
    ['pt', 'molecule', 'Polystyrene (2).xsd'],
    ['pe', 'text', 'Polystyrene (2).txt']
];
const cells = {
    p: '<i class="line pass"></i>',
    t: '<i class="line tee"></i>',
    e: '<i class="line end"></i>',
    b: '<i class="line tee"><i class="box"></i></i>'
};
document.getElementById('tree').innerHTML = tree.map(([lines, icon, name, state]) =>
    `<li>${[...lines].map(c => cells[c]).join('')}${draw(icon)}<span class="name ${state || ''}">${name}</span></li>`
).join('');

// temperature series: recorded extremes [ps, K], the rest follows the running mean
const extremes = [
    [0, 152.4], [.01, 157.5], [.015, 142.4], [.02, 132.2], [.03, 131.6], [.035, 151], [.045, 140], [.05, 170.4], [.06, 175], [.065, 159], [.09, 137.8],
    [.1, 110.9], [.105, 157], [.125, 161.7], [.13, 175], [.135, 164], [.14, 140], [.165, 132.7], [.195, 163.2], [.225, 134.6], [.245, 164.5], [.255, 137.6],
    [.265, 161], [.285, 134.1], [.29, 159.6], [.305, 134.9], [.315, 158.8], [.355, 141.3], [.385, 161.3], [.395, 160.2], [.435, 140.2], [.46, 160.7], [.49, 138.9],
    [.56, 137], [.59, 162.3], [.61, 140.8], [.66, 138.6], [.69, 162.9], [.7, 141.6], [.76, 162.9], [.8, 164.3], [.805, 140.8], [.865, 140.8],
    [.905, 133.2], [.935, 164.8], [1.015, 159.4], [1.025, 144], [1.1, 160.7], [1.125, 136.2], [1.16, 164.8], [1.22, 142.6], [1.23, 164], [1.27, 161],
    [1.33, 142.9], [1.35, 160.2], [1.39, 143.2], [1.45, 137.8], [1.515, 156.9], [1.575, 142.1], [1.625, 158.3], [1.68, 159.6], [1.705, 143.7],
    [1.735, 158.3], [1.76, 142.1], [1.79, 161], [1.87, 161], [1.91, 144.8], [1.92, 162.3], [1.985, 146.2], [1.99, 163.4], [2.005, 164.5], [2.08, 166.6],
    [2.105, 146.7], [2.15, 144], [2.195, 165.3], [2.215, 163.2], [2.225, 148.6], [2.265, 162.3], [2.345, 161.3], [2.36, 148], [2.405, 168.3],
    [2.53, 167], [2.595, 166], [2.625, 143.5], [2.675, 146], [2.745, 164.8], [2.75, 144.9], [2.845, 143.5], [2.865, 160], [2.885, 146.2], [2.93, 161.4],
    [2.95, 144.9], [2.99, 160.3], [3.01, 145.2], [3.06, 167.3], [3.07, 144.9], [3.16, 141.4], [3.19, 164.3], [3.21, 147], [3.3, 164.6], [3.325, 146.2],
    [3.345, 161.4], [3.395, 163.5], [3.42, 162.4], [3.425, 149.5], [3.515, 149.5], [3.55, 145.7], [3.61, 163.8], [3.63, 165.4], [3.64, 146.8], [3.68, 145.2],
    [3.75, 148.1], [3.77, 166.8], [3.795, 146], [3.885, 146.5], [3.935, 147], [3.965, 162.2], [4.015, 165.1], [4.045, 145.7], [4.075, 166.5], [4.165, 162.9],
    [4.18, 144.1], [4.21, 167.3], [4.24, 147.6], [4.28, 163.8], [4.31, 148.1], [4.35, 167], [4.36, 147.9], [4.38, 166], [4.41, 164.3], [4.45, 148.1],
    [4.485, 171.6], [4.535, 165.1], [4.565, 147.6], [4.585, 169.7], [4.615, 144.6], [4.635, 167.6], [4.655, 167], [4.715, 169.2], [4.735, 147], [4.755, 163.5],
    [4.795, 170], [4.82, 150.8], [4.83, 161.9], [4.93, 149.7], [4.96, 163.8], [4.99, 147.9], [5, 164.1]
];
// [ps, mean, spread]
const trend = [
    [0, 150, 10], [.3, 150, 9], [.8, 149.5, 8], [1, 153, 7], [1.3, 153, 6], [1.45, 151, 3], [1.6, 153, 5], [1.8, 153, 5], [2, 155, 6], [2.4, 156, 6],
    [2.7, 154, 6], [2.9, 152, 6], [3.2, 152.5, 6], [3.5, 155.5, 5], [4, 155, 7], [4.5, 157, 7], [4.7, 158.5, 7], [4.85, 155.5, 4], [5, 157, 7]
];

let seed = 7;
function random() {
    seed = (seed * 16807) % 2147483647;
    return seed / 2147483647;
}

function series() {
    const known = {};
    extremes.forEach(([t, k]) => { known[Math.round(t / .005)] = k; });
    const points = [];
    for (let i = 0; i <= 1000; i++) {
        const t = i * .005;
        const n = Math.max(1, trend.findIndex(p => p[0] >= t));
        const [a, b] = [trend[n - 1], trend[n]];
        const f = (t - a[0]) / (b[0] - a[0]);
        const mean = a[1] + (b[1] - a[1]) * f;
        const spread = a[2] + (b[2] - a[2]) * f;
        points.push([t, known[i] || mean + (random() * 2 - 1) * spread]);
    }
    return points;
}

const points = series();

function drawPlot() {
    const svg = document.getElementById('plot');
    const { width, height } = svg.getBoundingClientRect();
    const left = 95, right = width - 16, top = 13, bottom = height - 76;
    const x = t => left + (t + 3.27) / 13.27 * (right - left);
    const y = k => bottom - (k - 46.5) / 154.8 * (bottom - top);
    let grid = '', ticks = `M${left} ${top}V${bottom}H${right}`, labels = '';

    for (let k = 50; k <= 200; k += 10) {
        const py = Math.round(y(k));
        grid += `M${left} ${py}H${right}`;
        ticks += `M${left} ${py}h-9`;
        labels += `<text class="ylabel" x="${left - 19}" y="${py + 5}">${k}</text>`;
    }
    for (let i = -1; i < 45; i++) {
        ticks += `M${left} ${Math.round(y(50 + i * 10 / 3))}h-4`;
    }
    let minor = '';
    for (let i = -32; i < 100; i++) {
        const px = Math.round(x(i / 10));
        if (i % 5) {
            minor += `M${px} ${bottom}v5`;
        } else {
            minor += `M${px} ${bottom}v11`;
            labels += `<text x="${px}" y="${bottom + 30}">${i / 10}</text>`;
        }
    }
    const trace = points.map(([t, k]) => `${x(t).toFixed(1)} ${y(k).toFixed(1)}`);
    const mid = (top + bottom) / 2;

    svg.innerHTML = `
        <path class="grid" d="${grid}"/>
        <path class="frame" d="M${left} ${top}H${right}V${bottom}"/>
        <path class="axisline" d="${ticks}"/>
        <path class="axisline minor" d="${minor}"/>
        ${labels}
        <text class="axis" x="${(left + right) / 2}" y="${bottom + 65}">Time (ps)</text>
        <text class="axis" x="32" y="${mid}" transform="rotate(-90 32 ${mid})">Temperature (K)</text>
        <path class="series" d="M${trace.join('L')}"/>
        <path class="marks" d="${trace.map(p => `M${p}h0`).join('')}"/>`;
}

drawPlot();
window.addEventListener('resize', drawPlot);
```
